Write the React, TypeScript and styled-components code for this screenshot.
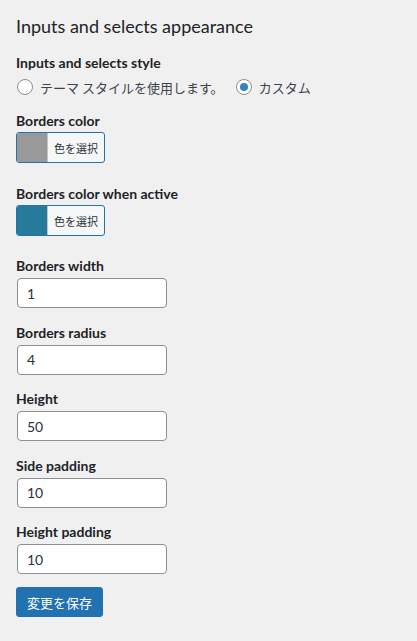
import styled, { createGlobalStyle } from "styled-components";

const GlobalStyle = createGlobalStyle`
  html, body {
    margin: 0;
    padding: 0;
    background: #f0f0f1;
  }
  body {
    font-family: Lato, "Noto Sans CJK JP", sans-serif;
    color: #3c434a;
    font-size: 13px;
  }
`;

const Page = styled.div`
  padding: 14px 16px 24px 16px;
  min-height: 641px;
  box-sizing: border-box;
`;

const Title = styled.h2`
  margin: 0 0 15px 0;
  font-size: 18px;
  line-height: 24px;
  font-weight: 400;
  color: #1d2327;
`;

const Label = styled.div`
  font-size: 14px;
  line-height: 20px;
  font-weight: 700;
  color: #1d2327;
`;

const Field = styled.div<{ $gap?: number }>`
  display: flex;
  flex-direction: column;
  align-items: flex-start;
  margin-bottom: ${(p) => p.$gap ?? 14}px;
`;

const RadioRow = styled.div`
  display: flex;
  align-items: center;
  gap: 11px;
  height: 22px;
  margin-top: 3px;
`;

const RadioOption = styled.label`
  display: flex;
  align-items: center;
  gap: 7px;
  font-family: "Noto Sans CJK JP", sans-serif;
  font-size: 13px;
  color: #3c434a;
`;

const RadioCircle = styled.span<{ $checked?: boolean }>`
  width: 16px;
  height: 16px;
  box-sizing: border-box;
  border-radius: 50%;
  border: 1px solid #8c8f94;
  background: #fff;
  margin-left: 1px;
  display: flex;
  align-items: center;
  justify-content: center;

  &::after {
    content: "";
    display: ${(p) => (p.$checked ? "block" : "none")};
    width: 8px;
    height: 8px;
    border-radius: 50%;
    background: #3582c4;
  }
`;

const ColorButton = styled.button`
  display: flex;
  align-items: stretch;
  height: 31px;
  padding: 0;
  margin-top: 1px;
  border: 1px solid #2271b1;
  border-radius: 3px;
  background: #f6f7f7;
  overflow: hidden;
  cursor: pointer;
`;

const Swatch = styled.span<{ $color: string }>`
  width: 30px;
  background: ${(p) => p.$color};
  border-right: 1px solid #c3c4c7;
`;

const SwatchText = styled.span`
  display: flex;
  align-items: center;
  padding: 0 6px 0 6px;
  font-size: 11px;
  color: #2c3338;
  font-family: "Noto Sans CJK JP", sans-serif;
`;

const TextInput = styled.input`
  width: 150px;
  height: 30px;
  box-sizing: border-box;
  margin: 2px 0 0 1px;
  padding: 0 9px;
  border: 1px solid #8c8f94;
  border-radius: 4px;
  background: #fff;
  font-family: Lato, sans-serif;
  font-size: 14px;
  color: #2c3338;
  outline: none;
`;

const SaveButton = styled.button`
  height: 30px;
  padding: 0 10px;
  border: 1px solid #2271b1;
  border-radius: 3px;
  background: #2271b1;
  color: #fff;
  font-family: "Noto Sans CJK JP", sans-serif;
  font-size: 13px;
  cursor: pointer;
`;

const numberFields = [
  { label: "Borders width", value: "1" },
  { label: "Borders radius", value: "4" },
  { label: "Height", value: "50" },
  { label: "Side padding", value: "10" },
  { label: "Height padding", value: "10" },
];

export default function App() {
  return (
    <>
      <GlobalStyle />
      <Page>
        <Title>Inputs and selects appearance</Title>

        <Field $gap={13}>
          <Label>Inputs and selects style</Label>
          <RadioRow>
            <RadioOption>
              <RadioCircle />
              テーマ スタイルを使用します。
            </RadioOption>
            <RadioOption>
              <RadioCircle $checked />
              カスタム
            </RadioOption>
          </RadioRow>
        </Field>

        <Field $gap={21}>
          <Label>Borders color</Label>
          <ColorButton>
            <Swatch $color="#999999" />
            <SwatchText>色を選択</SwatchText>
          </ColorButton>
        </Field>

        <Field $gap={20}>
          <Label>Borders color when active</Label>
          <ColorButton>
            <Swatch $color="#267a9b" />
            <SwatchText>色を選択</SwatchText>
          </ColorButton>
        </Field>

        {numberFields.map((f, i) => (
          <Field key={f.label} $gap={i === numberFields.length - 1 ? 13 : 14.5}>
            <Label>{f.label}</Label>
            <TextInput defaultValue={f.value} />
          </Field>
        ))}

        <SaveButton>変更を保存</SaveButton>
      </Page>
    </>
  );
}
